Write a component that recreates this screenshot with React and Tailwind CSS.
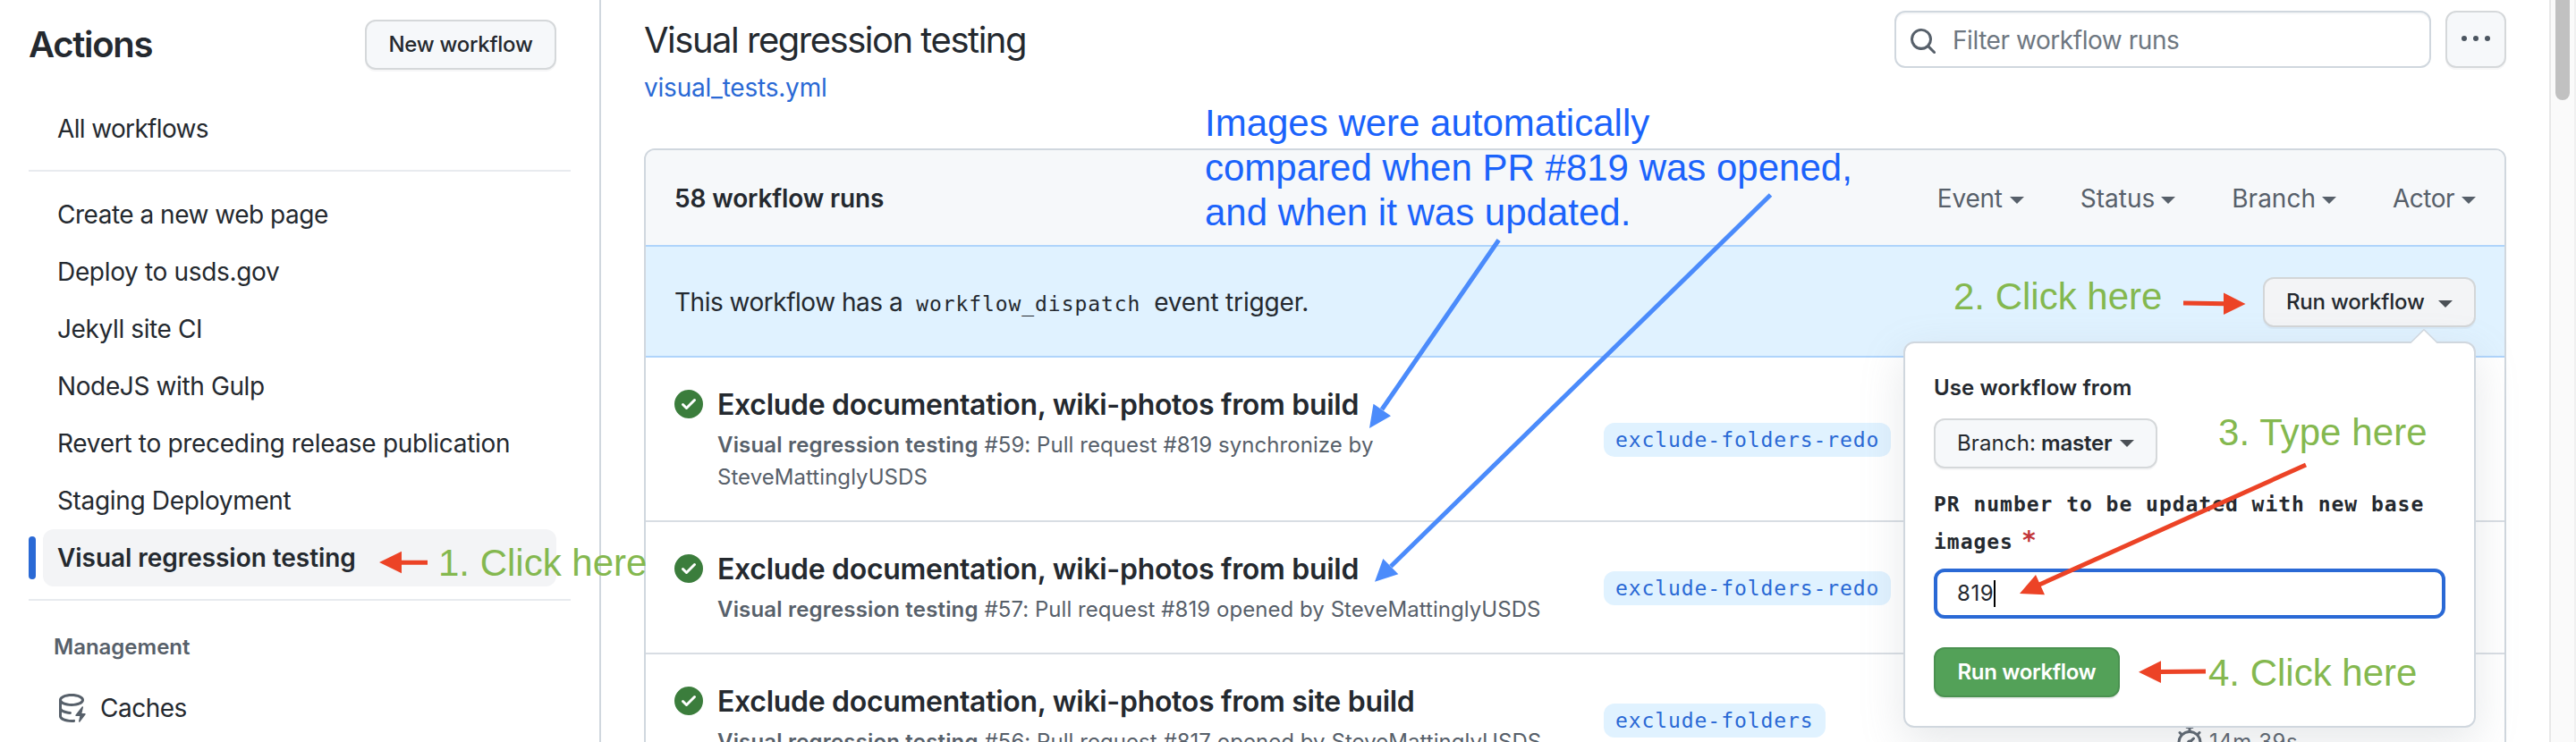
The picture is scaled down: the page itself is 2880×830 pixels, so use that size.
import React from "react";

const CHECK =
  "M8 16A8 8 0 1 1 8 0a8 8 0 0 1 0 16Zm3.78-9.72a.751.751 0 0 0-.018-1.042.751.751 0 0 0-1.042-.018L6.75 9.19 5.28 7.72a.751.751 0 0 0-1.042.018.751.751 0 0 0-.018 1.042l2 2a.75.75 0 0 0 1.06 0Z";
const SEARCH =
  "M10.68 11.74a6 6 0 0 1-7.922-8.982 6 6 0 0 1 8.982 7.922l3.04 3.04a.749.749 0 0 1-.326 1.275.749.749 0 0 1-.734-.215ZM11.5 7a4.499 4.499 0 1 0-8.997 0A4.499 4.499 0 0 0 11.5 7Z";
const STOPWATCH =
  "M5.75.75A.75.75 0 0 1 6.5 0h3a.75.75 0 0 1 0 1.5h-.75v1l-.001.041a6.724 6.724 0 0 1 3.464 1.435l.007-.006.75-.75a.749.749 0 0 1 1.275.326.749.749 0 0 1-.215.734l-.75.75-.006.007a6.75 6.75 0 1 1-10.548 0L2.72 5.03l-.75-.75a.751.751 0 0 1 .018-1.042.751.751 0 0 1 1.042-.018l.75.75.007.006A6.72 6.72 0 0 1 7.25 2.541V1.5H6.5a.75.75 0 0 1-.75-.75ZM8 14.5a5.25 5.25 0 1 0-.001-10.501A5.25 5.25 0 0 0 8 14.5Zm.389-6.7 1.33-1.33a.75.75 0 1 1 1.061 1.06L9.45 8.861A1.503 1.503 0 0 1 8 10.75a1.499 1.499 0 1 1 .389-2.95Z";
const CACHE =
  "M2.5 5.724V8c0 .248.238.7 1.169 1.159.874.43 2.144.745 3.62.822a.75.75 0 1 1-.078 1.498c-1.622-.085-3.102-.432-4.204-.975a5.565 5.565 0 0 1-.507-.28V12.5c0 .133.058.318.282.551.227.237.591.483 1.101.707 1.015.447 2.47.742 4.117.742.406 0 .802-.018 1.183-.052a.751.751 0 1 1 .134 1.494C8.89 15.98 8.45 16 8 16c-1.805 0-3.475-.32-4.721-.869-.623-.274-1.173-.619-1.579-1.041-.408-.425-.7-.964-.7-1.59v-9c0-.626.292-1.165.7-1.591.406-.42.956-.766 1.579-1.04C4.525.32 6.195 0 8 0c1.806 0 3.476.32 4.721.869.623.274 1.173.619 1.579 1.041.408.425.7.964.7 1.59 0 .626-.292 1.165-.7 1.591-.406.42-.956.766-1.578 1.04C11.475 6.68 9.805 7 8 7c-1.805 0-3.475-.32-4.721-.869a6.15 6.15 0 0 1-.779-.407Zm0-2.224c0 .133.058.318.282.551.227.237.591.483 1.101.707C4.898 5.205 6.353 5.5 8 5.5c1.646 0 3.101-.295 4.118-.742.508-.224.873-.471 1.1-.708.224-.232.282-.417.282-.55 0-.133-.058-.318-.282-.551-.227-.237-.591-.483-1.101-.707C11.102 1.795 9.647 1.5 8 1.5c-1.646 0-3.101.295-4.118.742-.508.224-.873.471-1.1.708-.224.232-.282.417-.282.55ZM14.49 7.582a.375.375 0 0 0-.66-.313l-3.625 4.625a.375.375 0 0 0 .295.606h2.127l-.619 2.922a.375.375 0 0 0 .666.304l3.125-4.125A.375.375 0 0 0 15.5 11h-1.778l.769-3.418Z";

function Icon({ d, className }) {
  return (
    <svg viewBox="0 0 16 16" className={className} fill="currentColor">
      <path d={d} />
    </svg>
  );
}

function Caret({ className }) {
  return (
    <svg viewBox="0 0 16 8" className={className} width="16" height="8" fill="currentColor">
      <path d="M0 0h16L8 8z" />
    </svg>
  );
}

const WORKFLOWS = [
  { name: "Create a new web page", tracking: "tracking-[-0.49px]" },
  { name: "Deploy to usds.gov", tracking: "tracking-[-0.33px]" },
  { name: "Jekyll site CI", tracking: "tracking-[-0.39px]" },
  { name: "NodeJS with Gulp", tracking: "tracking-[-0.38px]" },
  { name: "Revert to preceding release publication", tracking: "tracking-[-0.3px]" },
  { name: "Staging Deployment", tracking: "tracking-[-0.34px]" },
];

function Sidebar() {
  return (
    <aside className="w-[672px] shrink-0 border-r-2 border-[#d0d7de] pt-[22px] pl-8 pr-8">
      <div className="flex h-14 items-center justify-between pr-4">
        <h1 className="pb-px text-[40px] leading-[50px] font-semibold tracking-[-1.3px]">Actions</h1>
        <button className="h-14 w-[214px] rounded-xl border-2 border-[#d5d8da] bg-[#f6f8fa] pb-px text-2xl leading-9 font-medium tracking-[-0.27px] shadow-[0_2px_0_rgba(31,35,40,0.04)]">
          New workflow
        </button>
      </div>
      <div className="mt-[34px] flex h-16 items-center pl-8 text-[28px] tracking-[-0.65px]">All workflows</div>
      <div className="mt-[14px] h-[2px] bg-[#e8ebef]" />
      <ul className="mt-4 text-[28px]">
        {WORKFLOWS.map((w) => (
          <li key={w.name} className={`flex h-16 items-center pl-8 ${w.tracking}`}>
            {w.name}
          </li>
        ))}
        <li className="flex h-16 items-center gap-2 pr-4">
          <span className="h-12 w-2 rounded-full bg-[#2a69d5]" />
          <span className="flex h-16 flex-1 items-center rounded-xl bg-[#f3f4f6] pl-4 font-semibold tracking-[-0.05px]">
            Visual regression testing
          </span>
        </li>
      </ul>
      <div className="mt-[14px] h-[2px] bg-[#e8ebef]" />
      <div className="mt-[33px] pl-7 text-2xl leading-[38px] font-semibold tracking-[-0.01px] text-[#57606a]">Management</div>
      <div className="mt-[17px] flex h-16 items-center gap-4 pl-8 text-[28px] tracking-[-0.51px]">
        <Icon d={CACHE} className="size-8 text-[#57606a]" />
        Caches
      </div>
    </aside>
  );
}

const RUNS = [
  {
    title: "Exclude documentation, wiki-photos from build",
    detail: (
      <>
        #59: Pull request #819 synchronize by
        <br />
        SteveMattinglyUSDS
      </>
    ),
    branch: "exclude-folders-redo",
  },
  {
    title: "Exclude documentation, wiki-photos from build",
    detail: "#57: Pull request #819 opened by SteveMattinglyUSDS",
    branch: "exclude-folders-redo",
  },
  {
    title: "Exclude documentation, wiki-photos from site build",
    detail: "#56: Pull request #817 opened by SteveMattinglyUSDS",
    branch: "exclude-folders",
    duration: "14m 39s",
  },
];

function Run({ run }) {
  return (
    <div className="flex border-b-2 border-[#d8dde3] pl-8">
      <Icon d={CHECK} className="mt-9 size-8 shrink-0 text-[#3b7d3c]" />
      <div className="ml-4 w-[991px] shrink-0 pt-[29px] pb-[30px]">
        <div className="text-[32px] leading-[48px] font-semibold tracking-[-0.3px]">{run.title}</div>
        <div className="mt-[3px] text-2xl leading-9 tracking-[0.05px] text-[#57606a]">
          <span className="font-semibold tracking-[0.18px]">Visual regression testing</span> {run.detail}
        </div>
      </div>
      <div className="flex w-[639px] shrink-0 items-center pt-[2px]">
        <span className="h-[38px] rounded-xl bg-[#e0f2ff] px-[13px] font-['DejaVu_Sans_Mono',monospace] text-[23px] leading-[38px] tracking-[0.92px] text-[#2a69d5]">
          {run.branch}
        </span>
      </div>
      {run.duration && (
        <div className="mt-20 flex h-8 items-center gap-[6px] text-2xl leading-8 tracking-[0.54px] text-[#57606a]">
          <Icon d={STOPWATCH} className="size-8 shrink-0" />
          <span className="pt-[4px] whitespace-nowrap">{run.duration}</span>
        </div>
      )}
    </div>
  );
}

function DispatchMenu() {
  return (
    <div className="absolute top-[106px] right-8 z-10 h-[432px] w-[640px] rounded-xl border-2 border-[#d0d7de] bg-white px-8 pt-8 text-2xl shadow-[0_16px_48px_rgba(140,149,159,0.22)]">
      <svg className="absolute top-[-16px] right-[40px]" width="32" height="18" viewBox="0 0 32 18">
        <path d="M1 18V16L16 1L31 16V18z" fill="#fff" />
        <path d="M1 15.5L16 0.7L31 15.5" fill="none" stroke="#d0d7de" strokeWidth="1.6" />
      </svg>
      <div className="leading-9 font-semibold tracking-[0.1px]">Use workflow from</div>
      <button className="mt-4 flex h-14 w-[250px] items-center rounded-xl border-2 border-[#d5d8da] bg-[#f6f8fa] pl-6 tracking-[0.12px] shadow-[0_2px_0_rgba(31,35,40,0.04)]">
        Branch:<span className="ml-[6px] font-semibold tracking-[-0.2px]">master</span>
        <Caret className="ml-[9px] text-[#4b5056]" />
      </button>
      <div className="mt-[19px] font-['DejaVu_Sans_Mono',monospace] text-[23px] leading-[42px] font-bold tracking-[0.97px] whitespace-nowrap">
        PR number to be updated with new base
        <br />
        images<span className="ml-[9px] text-[28px] leading-[20px] text-[#c2363a]">*</span>
      </div>
      <div className="mt-[9px] flex h-14 w-[572px] items-center rounded-xl border-4 border-[#2a69d5] pl-[22px]">
        <span className="pb-px tracking-[0.6px]">819</span>
        <span className="h-[30px] w-[2px] bg-black" />
      </div>
      <button className="mt-8 h-14 w-52 rounded-xl border-2 border-[#4a9150] bg-[#53a158] pb-px font-semibold tracking-[-0.35px] text-white shadow-[0_2px_0_rgba(31,35,40,0.08)]">
        Run workflow
      </button>
    </div>
  );
}

function Main() {
  return (
    <main className="min-w-0 flex-1 px-12">
      <div className="flex h-[166px] items-start justify-between">
        <div className="pt-5">
          <h2 className="text-[40px] leading-[50px] tracking-[-1.49px]">Visual regression testing</h2>
          <a className="mt-[7px] block text-[28px] leading-[42px] tracking-[-0.21px] text-[#2a69d5]">visual_tests.yml</a>
        </div>
        <div className="flex gap-4 pt-3">
          <div className="flex h-16 w-[600px] items-center rounded-xl border-2 border-[#d0d7de] pl-[14px] shadow-[inset_0_2px_0_rgba(208,215,222,0.2)]">
            <Icon d={SEARCH} className="mt-[3px] size-8 text-[#57606a]" />
            <span className="ml-[17px] pt-px text-[28px] tracking-[-0.45px] text-[#6e7781]">Filter workflow runs</span>
          </div>
          <button className="flex h-16 w-[68px] items-center justify-center gap-[7px] rounded-xl border-2 border-[#d5d8da] bg-[#f6f8fa] pb-[2px] shadow-[0_2px_0_rgba(31,35,40,0.04)]">
            <span className="size-[6px] rounded-full bg-[#4b5560]" />
            <span className="size-[6px] rounded-full bg-[#4b5560]" />
            <span className="size-[6px] rounded-full bg-[#4b5560]" />
          </button>
        </div>
      </div>
      <section className="rounded-t-xl border-2 border-[#d0d7de]">
        <header className="flex h-[106px] items-center justify-between rounded-t-[10px] bg-[#f6f8fa] pt-px pr-8 pl-8 text-[28px]">
          <span className="font-semibold tracking-[-0.13px]">58 workflow runs</span>
          <div className="flex gap-[63px] text-[#57606a]">
            <span className="flex items-center tracking-[-0.22px]">
              Event <Caret className="mt-1 ml-[8px]" />
            </span>
            <span className="flex items-center">
              Status <Caret className="mt-1 ml-[7px]" />
            </span>
            <span className="flex items-center">
              Branch <Caret className="mt-1 ml-[7px]" />
            </span>
            <span className="flex items-center tracking-[-0.5px]">
              Actor <Caret className="mt-1 ml-[8px]" />
            </span>
          </div>
        </header>
        <div className="relative flex h-[126px] items-center justify-between border-y-2 border-[#afd4fb] bg-[#e0f2ff] pt-[2px] pr-8 pl-8">
          <div className="text-[28px]">
            <span className="tracking-[-0.49px]">This workflow has a</span>
            <span className="mr-[15px] ml-[15px] font-['DejaVu_Sans_Mono',monospace] text-[23px] tracking-[0.92px]">
              workflow_dispatch
            </span>
            <span className="tracking-[-0.17px]">event trigger.</span>
          </div>
          <button className="flex h-14 w-[238px] items-center rounded-xl border-2 border-[#d3d6d8] bg-[#f3f4f6] pl-6 text-2xl font-medium tracking-[-0.2px] shadow-[0_2px_0_rgba(31,35,40,0.04)]">
            Run workflow <Caret className="mt-1 ml-[15px] text-[#4b5056]" />
          </button>
          <DispatchMenu />
        </div>
        {RUNS.map((run, i) => (
          <Run key={i} run={run} />
        ))}
      </section>
    </main>
  );
}

function Scrollbar() {
  return (
    <div className="flex w-[30px] shrink-0 justify-center border-r-2 border-l-2 border-r-[#f0f0f0] border-l-[#e8e8e8] bg-[#fafafa]">
      <div className="h-28 w-4 rounded-b-full bg-[#c1c1c1]" />
    </div>
  );
}

/* Callouts and arrows drawn over the page. */
function Annotations() {
  return (
    <div className="pointer-events-none absolute inset-0 z-20 font-['Liberation_Sans',sans-serif] text-[42px] leading-[50px] whitespace-nowrap text-[#84b84f]">
      <svg className="absolute inset-0" width="2880" height="830" viewBox="0 0 2880 830">
        <g stroke="#4b8bfb" strokeWidth="5" fill="#4b8bfb">
          <path d="M1675.6 268.5L1545 458M1979.5 218L1555 633.5" />
          <path stroke="none" d="M1531 479L1535.5 451.7L1555 465.3zM1537 650.7L1546.3 625L1563.3 642.3z" />
        </g>
        <g stroke="#ec4326" strokeWidth="5" fill="#ec4326">
          <path d="M478 629.3H448M2441 339L2488 339.8M2578 520L2280 654M2466 751L2414 751.6" />
          <path
            stroke="none"
            d="M424 629L449 616.8V641.2zM2510.5 340L2486 327.5V352zM2258 664L2276 643L2286 665.3zM2391 751.7L2416 739.3V764z"
          />
        </g>
      </svg>
      <div className="absolute top-[113px] left-[1347px] text-[#1b63fb]">
        Images were automatically
        <br />
        compared when PR #819 was opened,
        <br />
        and when it was updated.
      </div>
      <div className="absolute top-[605px] left-[490px]">1. Click here</div>
      <div className="absolute top-[307px] left-[2184px]">2. Click here</div>
      <div className="absolute top-[459px] left-[2480px] tracking-[0.08px]">3. Type here</div>
      <div className="absolute top-[728px] left-[2469px]">4. Click here</div>
    </div>
  );
}

export default function App() {
  return (
    <div className="relative flex h-[830px] w-[2880px] overflow-hidden bg-white font-['Inter',sans-serif] text-[#24292f]">
      <Sidebar />
      <Main />
      <Scrollbar />
      <Annotations />
    </div>
  );
}
